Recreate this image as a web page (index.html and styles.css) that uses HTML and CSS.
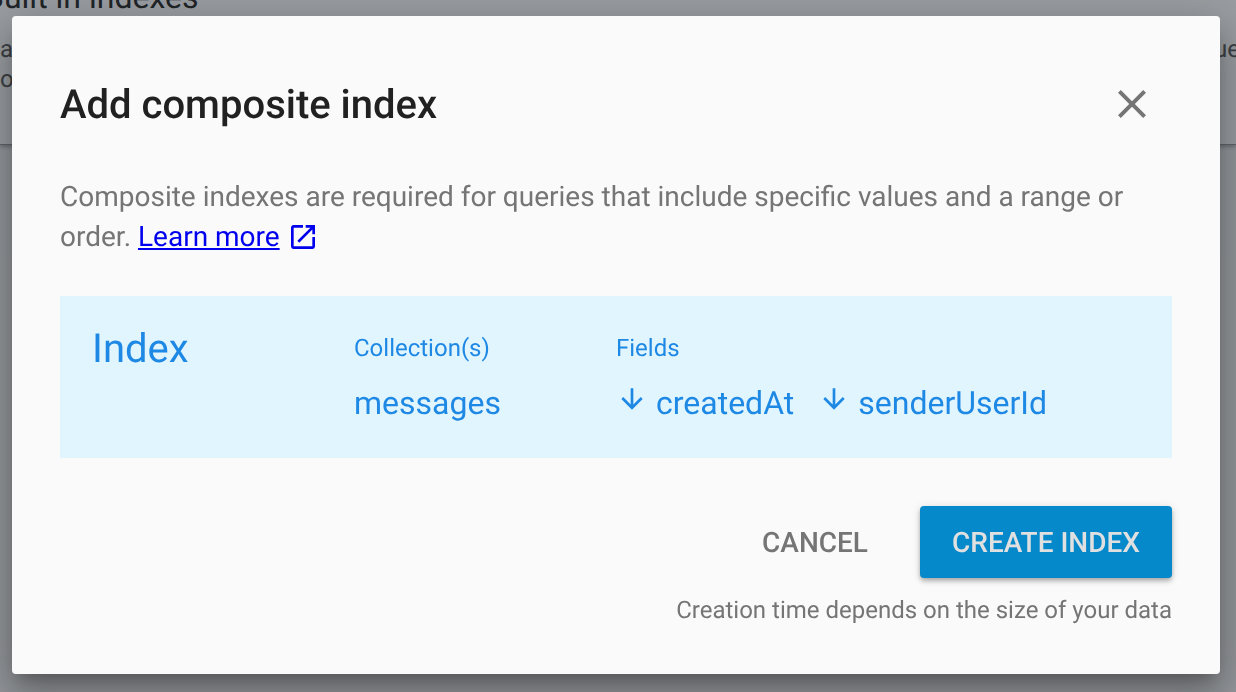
FILE: index.html
```html
<!DOCTYPE html>
<html lang="en">
<head>
<meta charset="utf-8">
<title>Add composite index</title>
<link rel="stylesheet" href="styles.css">
</head>
<body>
<div class="page">
  <header class="page-head">
    <h2 class="page-title">Built in indexes</h2>
    <div class="page-lines">
      <p class="page-line">a<span class="page-end">ue</span></p>
      <p class="page-line">o</p>
    </div>
  </header>
</div>
<div class="scrim"></div>
<section class="modal">
  <div class="modal-head">
    <h1 class="modal-title">Add composite index</h1>
    <svg class="close" viewBox="0 0 24 24" width="48" height="48"><path d="M19 6.41 17.59 5 12 10.59 6.41 5 5 6.41 10.59 12 5 17.59 6.41 19 12 13.41 17.59 19 19 17.59 13.41 12z" fill="#757575"/></svg>
  </div>
  <p class="intro">Composite indexes are required for queries that include specific values and a range or order. <a class="learn" href="#">Learn more</a><svg class="ext" viewBox="0 0 24 24" width="32" height="32"><path d="M19 19H5V5h7V3H5c-1.11 0-2 .9-2 2v14c0 1.1.89 2 2 2h14c1.1 0 2-.9 2-2v-7h-2v7zM14 3v2h3.59l-9.83 9.83 1.41 1.41L19 6.41V10h2V3h-7z" fill="#0000ee"/></svg></p>
  <div class="index-box">
    <div class="index-name">Index</div>
    <div class="col col-coll">
      <div class="col-label">Collection(s)</div>
      <div class="col-value">messages</div>
    </div>
    <div class="col">
      <div class="col-label">Fields</div>
      <div class="fields">
        <span class="field"><svg class="arrow" viewBox="0 0 24 24" width="32" height="32"><path d="M20 12l-1.410-1.410L13 16.170V4h-2v12.170l-5.580-5.590L4 12l8 8 8-8z" fill="#1e88e5"/></svg>createdAt</span>
        <span class="field"><svg class="arrow" viewBox="0 0 24 24" width="32" height="32"><path d="M20 12l-1.410-1.410L13 16.170V4h-2v12.170l-5.580-5.590L4 12l8 8 8-8z" fill="#1e88e5"/></svg>senderUserId</span>
      </div>
    </div>
  </div>
  <div class="actions">
    <button class="btn-cancel" type="button">CANCEL</button>
    <button class="btn-create" type="button">CREATE INDEX</button>
  </div>
  <p class="hint">Creation time depends on the size of your data</p>
</section>
</body>
</html>
```
FILE: styles.css
```css
* { box-sizing: border-box; }
html, body { margin: 0; height: 100%; }
body {
  width: 1236px;
  height: 692px;
  overflow: hidden;
  position: relative;
  font-family: Roboto, "Liberation Sans", sans-serif;
  text-rendering: geometricPrecision;
  background: #f5f5f5;
}
.page { height: 692px; overflow: hidden; }
.page-head {
  height: 145px;
  background: #fff;
  border-bottom: 1px solid #9a9a9a;
  box-shadow: 0 2px 4px rgba(0,0,0,.3);
  overflow: hidden;
}
.page-title {
  margin: -21px 0 0 -16px;
  font-size: 32px;
  line-height: 36px;
  font-weight: 400;
  color: #212121;
}
.page-lines { margin-top: 19px; }
.page-line {
  margin: 0;
  height: 30px;
  font-size: 24px;
  line-height: 30px;
  color: #555;
  display: flex;
  justify-content: space-between;
}
.page-end { margin-right: -4px; }
.scrim {
  position: absolute;
  inset: 0;
  background: rgba(32,39,48,.45);
}
.modal {
  position: absolute;
  left: 12px;
  top: 16px;
  width: 1208px;
  height: 658px;
  background: #fafafa;
  border-radius: 4px;
  will-change: transform;
  box-shadow: 0 11px 15px -7px rgba(0,0,0,.24), 0 24px 38px 3px rgba(0,0,0,.18), 0 9px 46px 8px rgba(0,0,0,.16);
  padding: 0 48px;
}
.modal-head {
  height: 128px;
  padding-top: 64px;
  display: flex;
  justify-content: space-between;
  align-items: flex-start;
}
.modal-title {
  margin: 1px 0 0;
  font-size: 40px;
  line-height: 48px;
  font-weight: 500;
  color: #212121;
}
.close { margin-right: 16px; }
.intro {
  margin: 33px 0 0;
  font-size: 28px;
  line-height: 40px;
  color: #757575;
  width: 1112px;
}
.learn { color: #0000ee; text-decoration: underline; }
.ext { margin-left: 7px; vertical-align: -7px; }
.index-box {
  margin-top: 39px;
  height: 162px;
  width: 1112px;
  background: #e1f5fe;
  color: #1e88e5;
  display: flex;
  padding: 0 33px 0 32px;
}
.index-name {
  width: 262px;
  font-size: 40px;
  line-height: 48px;
  padding-top: 29px;
}
.col { padding-top: 36px; }
.col-coll { width: 262px; }
.col-label { font-size: 24px; line-height: 32px; }
.col-value { margin-top: 21px; font-size: 32px; line-height: 36px; }
.fields { margin-top: 21px; display: flex; gap: 24px; font-size: 32px; line-height: 36px; }
.field { display: flex; align-items: flex-start; }
.arrow { margin-right: 8px; margin-top: -2px; }
.actions {
  margin-top: 48px;
  width: 1112px;
  display: flex;
  justify-content: flex-end;
  align-items: center;
  gap: 52px;
}
button {
  font-family: inherit;
  font-size: 28px;
  font-weight: 500;
  text-rendering: geometricPrecision;
  border: 0;
  padding: 0;
  cursor: pointer;
}
.btn-cancel { background: none; color: #757575; }
.btn-create {
  width: 252px;
  height: 72px;
  background: #0589cb;
  color: #e0e0e0;
  border-radius: 4px;
  box-shadow: 0 2px 4px -1px rgba(0,0,0,.2), 0 4px 5px rgba(0,0,0,.14), 0 1px 10px rgba(0,0,0,.12);
}
.hint {
  margin: 16px 0 0;
  width: 1112px;
  text-align: right;
  font-size: 24px;
  line-height: 32px;
  color: #757575;
}
```
